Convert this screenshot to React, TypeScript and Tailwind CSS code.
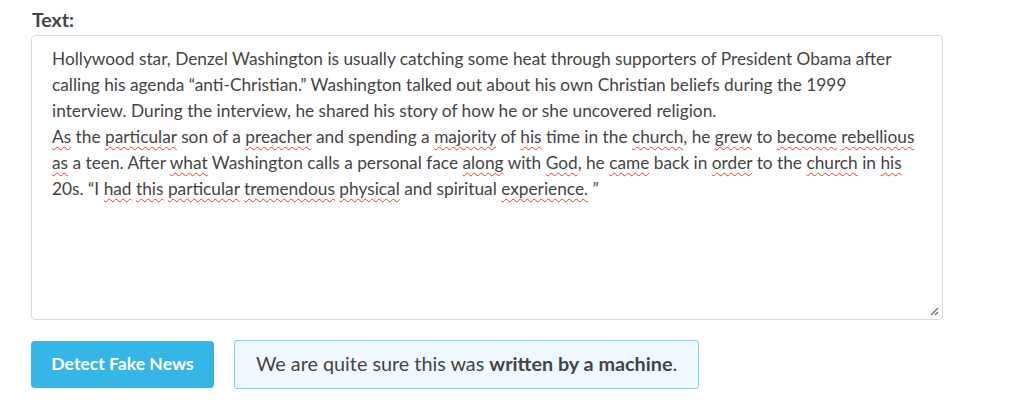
import React from "react";

// words the browser's spellchecker flagged in the reference
const Sp = ({ children }: { children: React.ReactNode }) => (
  <span className="underline decoration-wavy decoration-[#e53935] decoration-1 underline-offset-[3px]">
    {children}
  </span>
);

const ResizeHandle = () => (
  <svg width="10" height="10" viewBox="0 0 10 10" className="absolute right-[3px] bottom-[3px]">
    <path d="M9 2 L2 9 M9 6 L6 9" stroke="#666" strokeWidth="1.2" />
  </svg>
);

const App: React.FC = () => {
  return (
    <div className="w-[1020px] h-[414px] bg-white font-['Lato','Liberation_Sans',sans-serif] text-[#444]">
      <div className="pl-[31px] pt-[8px]">
        <label className="block text-[19.5px] font-bold leading-[24px] text-[#444] pl-[1px]">
          Text:
        </label>
        {/* textarea look-alike */}
        <div className="relative mt-[3px] w-[912px] h-[285px] border border-[#d9d9d9] rounded-[4px] pl-[20px] pt-[10px] text-[17.3px] leading-[26px] whitespace-nowrap">
          Hollywood star, Denzel Washington is usually catching some heat through supporters of President Obama after
          <br />
          calling his agenda “anti-Christian.” Washington talked out about his own Christian beliefs during the 1999
          <br />
          interview. During the interview, he shared his story of how he or she uncovered religion.
          <br />
          <Sp>As</Sp> the <Sp>particular</Sp> son of a <Sp>preacher</Sp> and spending a <Sp>majority</Sp> of{" "}
          <Sp>his</Sp> time in the <Sp>church</Sp>, he <Sp>grew</Sp> to <Sp>become</Sp> <Sp>rebellious</Sp>
          <br />
          <Sp>as</Sp> a teen. After <Sp>what</Sp> Washington calls a personal face <Sp>along</Sp> with <Sp>God</Sp>,
          he <Sp>came</Sp> back in <Sp>order</Sp> to the <Sp>church</Sp> in <Sp>his</Sp>
          <br />
          20s. “I <Sp>had</Sp> <Sp>this</Sp> <Sp>particular</Sp> <Sp>tremendous</Sp> <Sp>physical</Sp> and
          spiritual <Sp>experience.</Sp> ”
          <ResizeHandle />
        </div>

        <div className="flex items-center gap-[20px] mt-[20px]">
          <button className="w-[183px] h-[47px] bg-[#35b6e6] text-white font-bold text-[17.6px] rounded-[4px]">
            Detect Fake News
          </button>
          <div className="w-[465px] h-[49px] bg-[#eff8fe] border border-[#7fcff0] rounded-[3px] flex items-center pl-[21px] pb-[2px] text-[19.8px] text-[#444]">
            We are quite sure this was&nbsp;<span className="font-bold">written by a machine</span>.
          </div>
        </div>
      </div>
    </div>
  );
};

export default App;
